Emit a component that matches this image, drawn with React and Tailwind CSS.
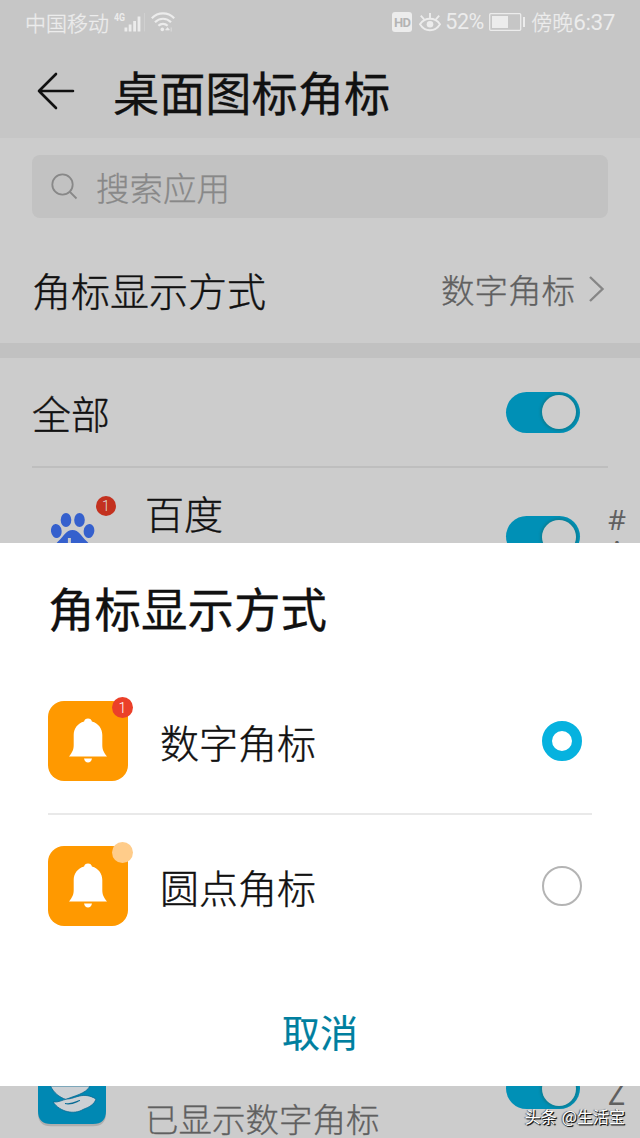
const BELL_ROWS = [
  { label: '数字角标', badge: 'number', checked: true },
  { label: '圆点角标', badge: 'dot', checked: false },
];

function SignalIcon() {
  return (
    <svg width="32" height="22" viewBox="0 0 32 22" fill="#ececec">
      <text x="0" y="9.5" fontSize="11.5" fontWeight="700" textLength="11" lengthAdjust="spacingAndGlyphs" fontFamily="Roboto, sans-serif">4G</text>
      <rect x="10.5" y="16.5" width="2.8" height="4" />
      <rect x="14.7" y="13.5" width="2.8" height="7" />
      <rect x="19.2" y="10" width="2.8" height="10.5" />
      <rect x="23.6" y="5.5" width="2.8" height="15" />
      <rect x="30" y="2" width="0.8" height="18.5" opacity="0.35" />
    </svg>
  );
}

function WifiIcon() {
  return (
    <svg width="24" height="20" viewBox="0 0 24 20" fill="none" stroke="#ececec" strokeWidth="2.2">
      <path d="M0.8 6.2C7 -0.2 17 -0.2 23.2 6.2" />
      <path d="M4 10.2C8.5 5.6 15.5 5.6 20 10.2" />
      <path d="M7.4 13.8C10 11.2 14 11.2 16.6 13.8" />
      <circle cx="11.3" cy="17.4" r="1.8" fill="#ececec" stroke="none" />
      <path d="M16.5 15.5l-2 2.5h4zM20.2 15.5v4" fill="#ececec" strokeWidth="0.6" />
    </svg>
  );
}

function EyeIcon() {
  return (
    <svg width="22" height="20" viewBox="0 0 22 20" fill="none" stroke="#ececec" strokeWidth="1.9">
      <path d="M1 12.2C6 5 16 5 21 12.2C16 20.2 6 20.2 1 12.2Z" />
      <circle cx="11" cy="12.2" r="3.3" fill="#ececec" stroke="none" />
      <path d="M11 6V1M5.2 7.5L1.8 3.6M16.8 7.5L20.2 3.6" />
    </svg>
  );
}

function BatteryIcon() {
  return (
    <svg width="37" height="18" viewBox="0 0 37 18">
      <rect x="0.7" y="0.7" width="31" height="16.6" rx="1" fill="none" stroke="#ececec" strokeWidth="1.3" />
      <rect x="3" y="3" width="16" height="12" fill="#ececec" />
      <rect x="34" y="4" width="2" height="10" fill="#ececec" />
    </svg>
  );
}

function StatusBar() {
  return (
    <div className="flex h-11 items-center justify-between px-[25px] text-[21px] leading-none font-light text-[#ececec] [-webkit-text-stroke:0.3px]">
      <div className="flex items-center">
        <span className="w-[84px] whitespace-nowrap">中国移动</span>
        <span className="ml-[5px] [-webkit-text-stroke:0]"><SignalIcon /></span>
        <span className="ml-[5px]"><WifiIcon /></span>
      </div>
      <div className="flex items-center">
        <span className="flex h-5 w-5 items-center justify-center rounded-[3px] bg-[#ececec] font-[Roboto] text-[13px] font-bold tracking-tighter text-[#b4b4b4] [-webkit-text-stroke:0]">HD</span>
        <span className="ml-[7px]"><EyeIcon /></span>
        <span className="ml-[4px] w-[39px] font-[Roboto] text-[21.5px] font-normal tracking-[-0.4px] [-webkit-text-stroke:0]">52%</span>
        <span className="ml-[5px]"><BatteryIcon /></span>
        <span className="ml-[5px] whitespace-nowrap">
          傍晚<span className="font-[Roboto] text-[22.5px] font-normal tracking-[-0.4px] [-webkit-text-stroke:0]">6:37</span>
        </span>
      </div>
    </div>
  );
}

function Toggle() {
  return (
    <div className="flex h-[41px] w-[74px] shrink-0 items-center justify-end rounded-full bg-[#0090b6] pr-[4px]">
      <div className="h-[34px] w-[34px] rounded-full bg-[#cccccc] shadow-[0_0_2px_2px_rgba(20,110,120,0.45)]" />
    </div>
  );
}

function PawIcon() {
  return (
    <svg width="44" height="50" viewBox="0 0 44 50" fill="#3560cd">
      <ellipse cx="5.3" cy="18" rx="5.3" ry="7" transform="rotate(-8 5.3 18)" />
      <ellipse cx="15" cy="7" rx="5.3" ry="7" />
      <ellipse cx="28.5" cy="7" rx="5.3" ry="7" />
      <ellipse cx="38" cy="18" rx="5.3" ry="7" transform="rotate(8 38 18)" />
      <path d="M21.5 17C28 17 30 23 36 28.5C42 34 40 46 31 46H12C3 46 1 34 7 28.5C13 23 15 17 21.5 17Z" />
      <path d="M18.4 25v13" stroke="#ccc" strokeWidth="3" />
    </svg>
  );
}

function HandsIcon() {
  return (
    <svg className="block" width="70" height="41" viewBox="0 0 70 41">
      <path d="M1 0H69V26Q69 39 56 39H14Q1 39 1 26Z" fill="#999" opacity="0.6" transform="translate(0 1.2)" />
      <path d="M1 0H69V25Q69 38 56 38H14Q1 38 1 25Z" fill="#0088b3" />
      <path d="M13.5 0C17 7 22 11 29 13.5C36 10 49 8 53 0Z" fill="#ccd0d4" stroke="#076a94" strokeWidth="0.8" />
      <path d="M16 16C22 16.5 25 14 30 13C38 13 46 5 59 13C57 19 52 21 46 23.5C37 29 23 26 16 16Z" fill="#ccd0d4" stroke="#076a94" strokeWidth="0.8" />
      <path d="M28 17.5C36 19 40 15 43 14.5" fill="none" stroke="#076a94" strokeWidth="1.2" />
    </svg>
  );
}

function BellIcon() {
  return (
    <svg width="40" height="46" viewBox="0 0 40 46" fill="#fff">
      <path d="M20 0.5C22.2 0.5 23.6 1.8 23.9 3.4C30.5 5.2 34.3 10.5 34.3 17V27C34.3 31.5 35.5 34 39 38.5H1C4.5 34 5.7 31.5 5.7 27V17C5.7 10.5 9.5 5.2 16.1 3.4C16.4 1.8 17.8 0.5 20 0.5Z" />
      <path d="M16 40.5H24C23.5 43 22 44.5 20 44.5S16.5 43 16 40.5Z" />
    </svg>
  );
}

function Option({ label, badge, checked }) {
  return (
    <div className="flex h-20 items-center">
      <div className="relative flex h-20 w-20 items-center justify-center rounded-[16px] bg-[#ff9900]">
        <BellIcon />
        {badge === 'number' ? (
          <span className="absolute -top-[4px] -right-[5px] flex h-[21px] w-[21px] items-center justify-center rounded-full bg-[#eb4029] font-[Roboto] text-[14px] leading-none font-light text-white">1</span>
        ) : (
          <span className="absolute -top-[4px] -right-[5px] h-[21px] w-[21px] rounded-full bg-[#ffcc8a]" />
        )}
      </div>
      <span className="ml-8 grow text-[39px] leading-[56px] font-light text-[#111] [-webkit-text-stroke:0.4px]">{label}</span>
      {checked ? (
        <span className="mr-[10px] h-10 w-10 rounded-full border-[10px] border-[#06b2df] bg-white" />
      ) : (
        <span className="mr-[10px] h-10 w-10 rounded-full border-2 border-[#b4b4b4]" />
      )}
    </div>
  );
}

function BadgeSheet() {
  return (
    <div className="h-[543px] bg-white px-12 pt-[30px]">
      <h2 className="h-[68px] text-[46.5px] leading-[68px] font-normal text-[#111] [-webkit-text-stroke:0.3px]">角标显示方式</h2>
      <div className="mt-[60px]">
        <Option {...BELL_ROWS[0]} />
        <div className="mt-8 mb-[31px] h-[2px] bg-[#e9e9e9]" />
        <Option {...BELL_ROWS[1]} />
      </div>
      <button className="mx-auto mt-[77px] block text-[38px] leading-[56px] font-normal text-[#007f9f] [-webkit-text-stroke:0.2px]">取消</button>
    </div>
  );
}

export default function App() {
  return (
    <div className="relative h-[1138px] w-[640px] overflow-hidden bg-[#cccccc] font-['Noto_Sans_CJK_SC',sans-serif] text-[#111]">
      <header className="h-[138px] bg-[#c6c6c6]">
        <StatusBar />
        <div className="flex h-[94px] items-center pl-[37px]">
          <svg width="38" height="38" viewBox="0 0 38 38" fill="none" stroke="#111" strokeWidth="2.6" strokeLinecap="round" strokeLinejoin="round">
            <path d="M36 19H2M19 2L2 19L19 36" />
          </svg>
          <h1 className="ml-[38px] text-[46.2px] leading-[68px] font-normal [-webkit-text-stroke:0.3px]">桌面图标角标</h1>
        </div>
      </header>

      <div className="mx-8 mt-[17px] flex h-[63px] items-center rounded-[8px] bg-[#c2c2c2] pl-[19px] text-[#888]">
        <svg width="27" height="27" viewBox="0 0 27 27" fill="none" stroke="#888" strokeWidth="1.8">
          <circle cx="11.5" cy="11.5" r="10.2" />
          <path d="M18.5 18.5L25.5 25.5" />
        </svg>
        <span className="ml-[18px] text-[33.5px] leading-[48px] font-light [-webkit-text-stroke:0.3px]">搜索应用</span>
      </div>

      <div className="flex h-[125px] items-center px-8 pt-[16px]">
        <span className="grow text-[39px] leading-[56px] font-light [-webkit-text-stroke:0.4px]">角标显示方式</span>
        <span className="text-[33.5px] leading-[48px] font-light text-[#606060] [-webkit-text-stroke:0.3px]">数字角标</span>
        <svg className="mr-[3px] ml-[13px]" width="17" height="28" viewBox="0 0 17 28" fill="none" stroke="#868686" strokeWidth="2.4">
          <path d="M2 2L14.5 14L2 26" />
        </svg>
      </div>

      <div className="h-[15px] bg-[#c1c1c1]" />

      <div className="mx-8 flex h-[110px] items-center justify-between border-b-[2px] border-[#bebebe] pr-7">
        <span className="text-[39px] leading-[54px] font-light [-webkit-text-stroke:0.4px]">全部</span>
        <Toggle />
      </div>

      {/* list rows are cut off by the sheet */}
      <div className="flex h-[75px] items-start overflow-hidden">
        <div className="relative w-[113px] shrink-0 pt-[45px] pl-[51px]">
          <PawIcon />
          <span className="absolute top-[28px] right-[-3px] flex h-5 w-5 items-center justify-center rounded-full bg-[#c3311f] font-[Roboto] text-[14px] leading-none font-light text-[#ddd]">1</span>
        </div>
        <span className="mt-[16px] ml-8 grow text-[39px] leading-[56px] font-light [-webkit-text-stroke:0.4px]">百度</span>
        <div className="mt-[48px]"><Toggle /></div>
        <div className="mt-[37px] ml-7 flex w-8 flex-col font-['Noto_Sans'] text-[28px] leading-[28px] text-[#606060]">
          <span>#</span>
          <span className="mt-[3px] leading-[28px]">A</span>
        </div>
      </div>

      <BadgeSheet />

      <div className="flex h-[52px] items-start overflow-hidden">
        <div className="ml-[37px]"><HandsIcon /></div>
        <span className="mt-[8px] ml-[38px] grow text-[33.5px] leading-[48px] font-light text-[#606060] [-webkit-text-stroke:0.3px]">已显示数字角标</span>
        <div className="-mt-[18px]"><Toggle /></div>
        <div className="-mt-[10px] ml-7 w-8 font-['Noto_Sans'] text-[30px] leading-[36px] text-[#606060]">Z</div>
      </div>

      <div className="absolute right-[15px] bottom-[10px] flex gap-[5px] text-[16px] leading-6 whitespace-nowrap text-white [text-shadow:1px_1px_1px_#111,1px_1px_0_#333,-1px_0_1px_#555]">
        <span>头条</span>
        <span>@生活宝</span>
      </div>
    </div>
  );
}
